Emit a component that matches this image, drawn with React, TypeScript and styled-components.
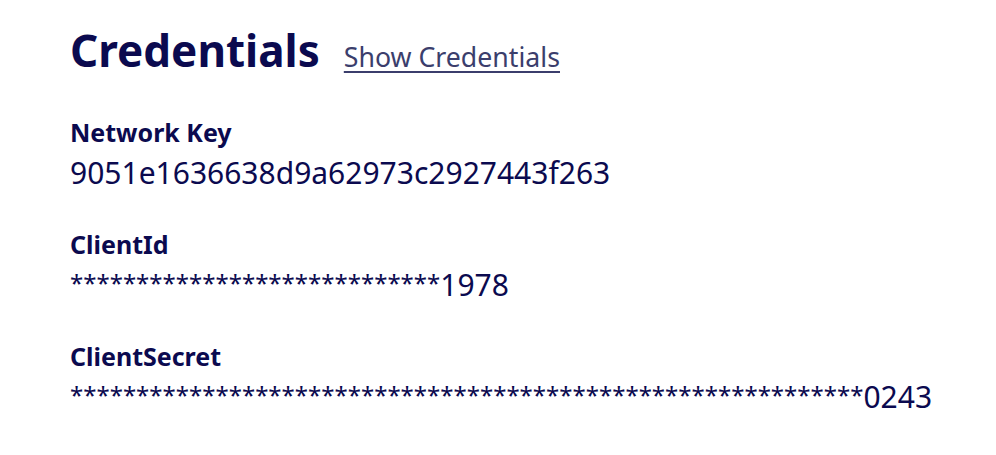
import React from "react";
import styled, { createGlobalStyle } from "styled-components";

const GlobalStyle = createGlobalStyle`
  html, body { margin: 0; padding: 0; background: #ffffff; }
  body { font-family: "Noto Sans", "Open Sans", sans-serif; color: #0b0a4f; }
`;

const Page = styled.main`
  display: flex;
  flex-direction: column;
  padding: 24px 0 0 70px;
`;

const Header = styled.div`
  display: flex;
  align-items: baseline;
  gap: 24px;
  margin-bottom: 41px;
`;

const Title = styled.h1`
  margin: 0;
  font-size: 44px;
  line-height: 52px;
  font-weight: 700;
  color: #0b0a4f;
`;

const ToggleLink = styled.a`
  font-size: 26.7px;
  line-height: 32px;
  color: #3b3e6c;
  text-decoration: underline;
  text-underline-offset: 4px;
  text-decoration-thickness: 2px;
  cursor: pointer;
`;

const Field = styled.section`
  display: flex;
  flex-direction: column;
  gap: 8px;
  margin-bottom: 38px;
`;

const Label = styled.h3`
  margin: 0;
  font-size: 25px;
  line-height: 30px;
  font-weight: 700;
  color: #0b0a4f;
`;

const Value = styled.div`
  font-size: 30px;
  line-height: 36px;
  color: #0b0a4f;
  white-space: nowrap;
`;

const Mask = styled.span`
  font-size: 24px;
  line-height: 1;
  vertical-align: 4px;
`;

const fields: { label: string; mask: number; value: string }[] = [
  { label: "Network Key", mask: 0, value: "9051e1636638d9a62973c2927443f263" },
  { label: "ClientId", mask: 28, value: "1978" },
  { label: "ClientSecret", mask: 60, value: "0243" },
];

export default function App() {
  return (
    <>
      <GlobalStyle />
      <Page>
        <Header>
          <Title>Credentials</Title>
          <ToggleLink>Show Credentials</ToggleLink>
        </Header>
        {fields.map((f) => (
          <Field key={f.label}>
            <Label>{f.label}</Label>
            <Value>
              {f.mask > 0 && <Mask>{"*".repeat(f.mask)}</Mask>}
              {f.value}
            </Value>
          </Field>
        ))}
      </Page>
    </>
  );
}
